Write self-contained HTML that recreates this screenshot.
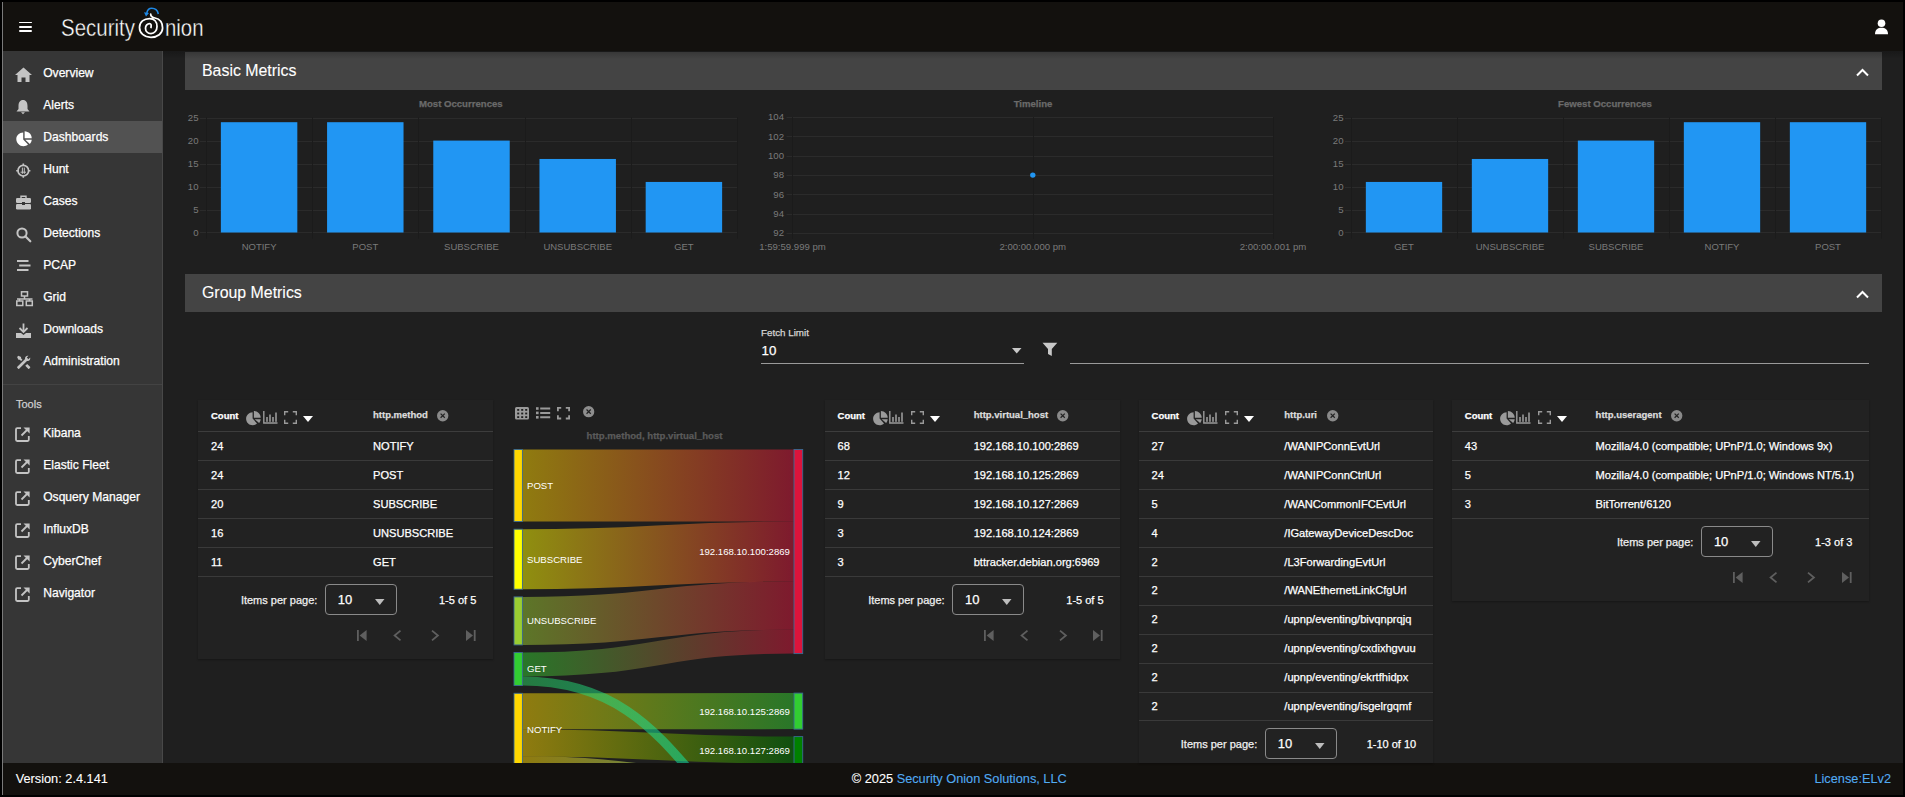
<!DOCTYPE html><html><head><meta charset="utf-8"><style>
html,body{margin:0;padding:0;width:1905px;height:797px;overflow:hidden;background:#000;}
body{position:relative;font-family:"Liberation Sans",sans-serif;}
.t{position:absolute;white-space:nowrap;-webkit-text-stroke:0.25px currentColor;}
.r{position:absolute;}
svg{position:absolute;overflow:visible;}
</style></head><body>
<div class="r" style="left:2px;top:2px;width:1px;height:793px;background:#7a7a7a;"></div>
<div class="r" style="left:3px;top:2px;width:1900px;height:49px;background:#13110e;"></div>
<div class="r" style="left:3px;top:51px;width:159px;height:712px;background:#363636;"></div>
<div class="r" style="left:162px;top:51px;width:1px;height:712px;background:#484848;"></div>
<div class="r" style="left:163px;top:51px;width:1740px;height:712px;background:#1f1f1f;"></div>
<div class="r" style="left:3px;top:763px;width:1900px;height:32px;background:#13110e;"></div>
<div class="r" style="left:19px;top:21.5px;width:12.5px;height:1.9px;background:#fff;border-radius:1px;"></div>
<div class="r" style="left:19px;top:25.8px;width:12.5px;height:1.9px;background:#fff;border-radius:1px;"></div>
<div class="r" style="left:19px;top:30.1px;width:12.5px;height:1.9px;background:#fff;border-radius:1px;"></div>
<svg style="left:61px;top:2px;" width="150" height="48" viewBox="0 0 150 48">
<text x="0" y="34" font-family="Liberation Sans" font-size="24.3" fill="#fff" stroke="#13110e" stroke-width="0.4" textLength="74" lengthAdjust="spacingAndGlyphs">Security</text>
<text x="104" y="34" font-family="Liberation Sans" font-size="24.3" fill="#fff" stroke="#13110e" stroke-width="0.4" textLength="38.5" lengthAdjust="spacingAndGlyphs">nion</text>
<path d="M89.7 12.2 C89.7 14.5 91.5 15.5 94 16 C99 17 101.6 21 101.6 26 C101.6 31.5 96.5 35.3 90 35.3 C83 35.3 78.5 31 78.5 25.5 C78.5 20 83 16.5 88.5 16.5 C93 16.5 96 19.5 96 24.5 C96 28.5 93.5 31.5 90 31.5 C86.5 31.5 84.5 29 84.5 26.2 C84.5 23.5 86.5 21.5 88.5 21.5 C90 21.5 90.5 23 90 25.5" fill="none" stroke="#fff" stroke-width="1.75" stroke-linecap="round"/>
<path d="M97.3 12 C96.5 8 94 6.3 90.7 6.3 C88 6.3 86.3 8.5 85.8 11" fill="none" stroke="#1e88e5" stroke-width="1.6"/>
<path d="M83 10.3 L88 11 L85 14.6 Z" fill="#1e88e5"/>
</svg>
<svg style="left:1870px;top:14px;" width="20" height="24" viewBox="0 0 20 24"><circle cx="11.5" cy="9.3" r="3.8" fill="#fff"/><path d="M5 20.3 C5 15.5 8 13.8 11.5 13.8 C15 13.8 18 15.5 18 20.3 Z" fill="#fff"/></svg>
<svg style="left:14.8px;top:67px;" width="18" height="17" viewBox="0 0 18 17"><path d="M8.5 0.5 L17 8 L14.5 8 L14.5 15 L10.5 15 L10.5 10.5 L6.5 10.5 L6.5 15 L2.5 15 L2.5 8 L0 8 Z" fill="#c4c4c4"/></svg>
<div class="t" style="left:43.2px;top:66.76px;font-size:12.1px;line-height:12.1px;color:#fff;font-weight:normal;">Overview</div>
<svg style="left:15.5px;top:99px;" width="18" height="17" viewBox="0 0 18 17"><path d="M7 1 C10 1 11.5 3.5 11.5 7 L11.5 10 L13.5 12.5 L0.5 12.5 L2.5 10 L2.5 7 C2.5 3.5 4 1 7 1 Z" fill="#c4c4c4"/><path d="M5 13.3 L9 13.3 L7 15.2 Z" fill="#c4c4c4"/></svg>
<div class="t" style="left:43.2px;top:98.76px;font-size:12.1px;line-height:12.1px;color:#fff;font-weight:normal;">Alerts</div>
<div class="r" style="left:3px;top:121px;width:159px;height:32px;background:#525252;"></div>
<svg style="left:15.5px;top:131px;" width="18" height="17" viewBox="0 0 18 17"><path d="M7.2 1.5 L7.2 8.5 L12 13.5 C10.8 14.6 9.2 15.2 7.5 15.2 C3.5 15.2 0.3 12 0.3 8 C0.3 4.4 3.2 1.6 7.2 1.5 Z" fill="#fff"/><path d="M8.6 0.3 C12.6 0.5 15.7 3.4 15.7 7.2 L8.6 7.2 Z" fill="#fff"/><path d="M9.3 8.8 L15.7 8.8 C15.6 10.4 15 11.8 13.8 12.9 Z" fill="#fff"/></svg>
<div class="t" style="left:43.2px;top:130.76px;font-size:12.1px;line-height:12.1px;color:#fff;font-weight:normal;">Dashboards</div>
<svg style="left:15.5px;top:163px;" width="18" height="17" viewBox="0 0 18 17"><circle cx="7.3" cy="7.7" r="5.3" fill="none" stroke="#c4c4c4" stroke-width="1.7"/><path d="M7.3 0.6 V3 M7.3 12.4 V14.8 M0.2 7.7 H2.6 M12 7.7 H14.4" stroke="#c4c4c4" stroke-width="1.6"/><path d="M6.4 4.6 V10.8 M8.3 4.6 V10.8 M4.6 9.2 H10" stroke="#c4c4c4" stroke-width="1"/></svg>
<div class="t" style="left:43.2px;top:162.76px;font-size:12.1px;line-height:12.1px;color:#fff;font-weight:normal;">Hunt</div>
<svg style="left:15.5px;top:195px;" width="18" height="17" viewBox="0 0 18 17"><path d="M5 3 V1.2 H10 V3" fill="none" stroke="#c4c4c4" stroke-width="1.4"/><rect x="0" y="3" width="15" height="5" rx="1.2" fill="#c4c4c4"/><rect x="0" y="9" width="15" height="5.5" rx="1.2" fill="#c4c4c4"/><rect x="6" y="7" width="3" height="3" fill="#363636"/></svg>
<div class="t" style="left:43.2px;top:194.76px;font-size:12.1px;line-height:12.1px;color:#fff;font-weight:normal;">Cases</div>
<svg style="left:15.5px;top:227px;" width="18" height="17" viewBox="0 0 18 17"><circle cx="6" cy="6" r="4.6" fill="none" stroke="#c4c4c4" stroke-width="2"/><path d="M9.3 9.3 L14.3 14.3" stroke="#c4c4c4" stroke-width="2.2" stroke-linecap="round"/></svg>
<div class="t" style="left:43.2px;top:226.76px;font-size:12.1px;line-height:12.1px;color:#fff;font-weight:normal;">Detections</div>
<svg style="left:15.5px;top:259px;" width="18" height="17" viewBox="0 0 18 17"><path d="M1 2 H12.5 M3.2 6.5 H14.5 M1 11 H12.5" stroke="#c4c4c4" stroke-width="1.9"/></svg>
<div class="t" style="left:43.2px;top:258.76px;font-size:12.1px;line-height:12.1px;color:#fff;font-weight:normal;">PCAP</div>
<svg style="left:15.5px;top:291px;" width="18" height="17" viewBox="0 0 18 17"><rect x="5.5" y="0.8" width="6" height="4.2" fill="none" stroke="#c4c4c4" stroke-width="1.5"/><path d="M8.5 5 V7.5 M1 8 H16.5 M3.5 8 V10 M13.5 8 V10" stroke="#c4c4c4" stroke-width="1.5"/><rect x="0.8" y="10" width="6" height="4.5" fill="none" stroke="#c4c4c4" stroke-width="1.5"/><rect x="10.3" y="10" width="6" height="4.5" fill="none" stroke="#c4c4c4" stroke-width="1.5"/></svg>
<div class="t" style="left:43.2px;top:290.76px;font-size:12.1px;line-height:12.1px;color:#fff;font-weight:normal;">Grid</div>
<svg style="left:15.5px;top:323px;" width="18" height="17" viewBox="0 0 18 17"><path d="M7.5 0.5 V8" stroke="#c4c4c4" stroke-width="1.8"/><path d="M3.5 5 L7.5 9 L11.5 5" fill="none" stroke="#c4c4c4" stroke-width="1.8"/><path d="M0 10 H5 L7.5 12 L10 10 H15 V15 H0 Z" fill="#c4c4c4"/></svg>
<div class="t" style="left:43.2px;top:322.76px;font-size:12.1px;line-height:12.1px;color:#fff;font-weight:normal;">Downloads</div>
<svg style="left:15.5px;top:355px;" width="18" height="17" viewBox="0 0 18 17"><g transform="translate(15.6,-0.6) scale(-0.66,0.66)"><path d="M21.71 20.29L20.29 21.71A1 1 0 0 1 18.88 21.71L7 9.85A3.81 3.81 0 0 1 6 10A4 4 0 0 1 2.22 4.7L4.76 7.24L5.29 6.71L6.71 5.29L7.24 4.76L4.7 2.22A4 4 0 0 1 10 6A3.81 3.81 0 0 1 9.85 7L21.71 18.88A1 1 0 0 1 21.71 20.29M2.29 18.88A1 1 0 0 0 2.290 20.29L3.71 21.71A1 1 0 0 0 5.12 21.71L9.59 17.25L6.76 14.42M20 2L16 4V6L13.83 8.17L15.83 10.17L18 8H20L22 4Z" fill="#c4c4c4"/></g></svg>
<div class="t" style="left:43.2px;top:354.76px;font-size:12.1px;line-height:12.1px;color:#fff;font-weight:normal;">Administration</div>
<div class="r" style="left:3px;top:384px;width:159px;height:1px;background:#434343;"></div>
<div class="t" style="left:16px;top:398.69px;font-size:11px;line-height:11px;color:#cfcfcf;font-weight:normal;">Tools</div>
<svg style="left:15.3px;top:426.7px;" width="16" height="16" viewBox="0 0 16 16"><path d="M6 1.2 H2.2 C1.5 1.2 1 1.7 1 2.4 V12.8 C1 13.5 1.5 14 2.2 14 H12.6 C13.3 14 13.8 13.5 13.8 12.8 V9" fill="none" stroke="#c4c4c4" stroke-width="1.8"/><path d="M6.5 8.5 L13 2" stroke="#c4c4c4" stroke-width="1.8"/><path d="M8.5 0.5 H14.6 V6.6 Z" fill="#c4c4c4"/></svg>
<div class="t" style="left:43.2px;top:426.76px;font-size:12.1px;line-height:12.1px;color:#fff;font-weight:normal;">Kibana</div>
<svg style="left:15.3px;top:458.7px;" width="16" height="16" viewBox="0 0 16 16"><path d="M6 1.2 H2.2 C1.5 1.2 1 1.7 1 2.4 V12.8 C1 13.5 1.5 14 2.2 14 H12.6 C13.3 14 13.8 13.5 13.8 12.8 V9" fill="none" stroke="#c4c4c4" stroke-width="1.8"/><path d="M6.5 8.5 L13 2" stroke="#c4c4c4" stroke-width="1.8"/><path d="M8.5 0.5 H14.6 V6.6 Z" fill="#c4c4c4"/></svg>
<div class="t" style="left:43.2px;top:458.76px;font-size:12.1px;line-height:12.1px;color:#fff;font-weight:normal;">Elastic Fleet</div>
<svg style="left:15.3px;top:490.7px;" width="16" height="16" viewBox="0 0 16 16"><path d="M6 1.2 H2.2 C1.5 1.2 1 1.7 1 2.4 V12.8 C1 13.5 1.5 14 2.2 14 H12.6 C13.3 14 13.8 13.5 13.8 12.8 V9" fill="none" stroke="#c4c4c4" stroke-width="1.8"/><path d="M6.5 8.5 L13 2" stroke="#c4c4c4" stroke-width="1.8"/><path d="M8.5 0.5 H14.6 V6.6 Z" fill="#c4c4c4"/></svg>
<div class="t" style="left:43.2px;top:490.76px;font-size:12.1px;line-height:12.1px;color:#fff;font-weight:normal;">Osquery Manager</div>
<svg style="left:15.3px;top:522.7px;" width="16" height="16" viewBox="0 0 16 16"><path d="M6 1.2 H2.2 C1.5 1.2 1 1.7 1 2.4 V12.8 C1 13.5 1.5 14 2.2 14 H12.6 C13.3 14 13.8 13.5 13.8 12.8 V9" fill="none" stroke="#c4c4c4" stroke-width="1.8"/><path d="M6.5 8.5 L13 2" stroke="#c4c4c4" stroke-width="1.8"/><path d="M8.5 0.5 H14.6 V6.6 Z" fill="#c4c4c4"/></svg>
<div class="t" style="left:43.2px;top:522.76px;font-size:12.1px;line-height:12.1px;color:#fff;font-weight:normal;">InfluxDB</div>
<svg style="left:15.3px;top:554.7px;" width="16" height="16" viewBox="0 0 16 16"><path d="M6 1.2 H2.2 C1.5 1.2 1 1.7 1 2.4 V12.8 C1 13.5 1.5 14 2.2 14 H12.6 C13.3 14 13.8 13.5 13.8 12.8 V9" fill="none" stroke="#c4c4c4" stroke-width="1.8"/><path d="M6.5 8.5 L13 2" stroke="#c4c4c4" stroke-width="1.8"/><path d="M8.5 0.5 H14.6 V6.6 Z" fill="#c4c4c4"/></svg>
<div class="t" style="left:43.2px;top:554.76px;font-size:12.1px;line-height:12.1px;color:#fff;font-weight:normal;">CyberChef</div>
<svg style="left:15.3px;top:586.7px;" width="16" height="16" viewBox="0 0 16 16"><path d="M6 1.2 H2.2 C1.5 1.2 1 1.7 1 2.4 V12.8 C1 13.5 1.5 14 2.2 14 H12.6 C13.3 14 13.8 13.5 13.8 12.8 V9" fill="none" stroke="#c4c4c4" stroke-width="1.8"/><path d="M6.5 8.5 L13 2" stroke="#c4c4c4" stroke-width="1.8"/><path d="M8.5 0.5 H14.6 V6.6 Z" fill="#c4c4c4"/></svg>
<div class="t" style="left:43.2px;top:586.76px;font-size:12.1px;line-height:12.1px;color:#fff;font-weight:normal;">Navigator</div>
<div class="t" style="left:15.7px;top:773.21px;font-size:12.75px;line-height:12.75px;color:#fff;font-weight:normal;-webkit-text-stroke:0.1px currentColor;">Version: 2.4.141</div>
<div class="t" style="left:851.8px;top:773.21px;font-size:12.75px;line-height:12.75px;color:#fff;font-weight:normal;-webkit-text-stroke:0.1px currentColor;">© 2025 <span style="color:#52abf2">Security Onion Solutions, LLC</span></div>
<div class="t" style="right:14px;top:773.21px;font-size:12.75px;line-height:12.75px;color:#52abf2;font-weight:normal;-webkit-text-stroke:0.1px currentColor;">License:ELv2</div>
<div class="r" style="left:185px;top:52px;width:1697px;height:38px;background:#444444;"></div>
<div class="t" style="left:202px;top:62.54px;font-size:15.9px;line-height:15.9px;color:#fff;font-weight:normal;-webkit-text-stroke:0.1px currentColor;">Basic Metrics</div>
<svg style="left:1855px;top:67.8px;" width="16" height="10" viewBox="0 0 16 10"><path d="M2 7.5 L7.5 2 L13 7.5" fill="none" stroke="#fff" stroke-width="2"/></svg>
<div class="r" style="left:185px;top:274px;width:1697px;height:38px;background:#444444;"></div>
<div class="t" style="left:202px;top:284.54px;font-size:15.9px;line-height:15.9px;color:#fff;font-weight:normal;-webkit-text-stroke:0.1px currentColor;">Group Metrics</div>
<svg style="left:1855px;top:289.8px;" width="16" height="10" viewBox="0 0 16 10"><path d="M2 7.5 L7.5 2 L13 7.5" fill="none" stroke="#fff" stroke-width="2"/></svg>
<div class="r" style="left:163px;top:51px;width:1740px;height:8px;background:linear-gradient(rgba(0,0,0,0.22),rgba(0,0,0,0));"></div>
<svg style="left:0px;top:0px;left:0;top:0;" width="1905" height="797" viewBox="0 0 1905 797"><line x1="200" y1="232.5" x2="737" y2="232.5" stroke="#2b2b2b" stroke-width="1"/><line x1="200" y1="210.5" x2="737" y2="210.5" stroke="#2b2b2b" stroke-width="1"/><line x1="200" y1="187.5" x2="737" y2="187.5" stroke="#2b2b2b" stroke-width="1"/><line x1="200" y1="164.5" x2="737" y2="164.5" stroke="#2b2b2b" stroke-width="1"/><line x1="200" y1="141.5" x2="737" y2="141.5" stroke="#2b2b2b" stroke-width="1"/><line x1="200" y1="118.5" x2="737" y2="118.5" stroke="#2b2b2b" stroke-width="1"/><line x1="206.5" y1="117.6" x2="206.5" y2="238.5" stroke="#1b1b1b" stroke-width="1"/><line x1="312.5" y1="117.6" x2="312.5" y2="238.5" stroke="#1b1b1b" stroke-width="1"/><line x1="418.5" y1="117.6" x2="418.5" y2="238.5" stroke="#1b1b1b" stroke-width="1"/><line x1="525.5" y1="117.6" x2="525.5" y2="238.5" stroke="#1b1b1b" stroke-width="1"/><line x1="631.5" y1="117.6" x2="631.5" y2="238.5" stroke="#1b1b1b" stroke-width="1"/><line x1="737.5" y1="117.6" x2="737.5" y2="238.5" stroke="#1b1b1b" stroke-width="1"/><rect x="220.87" y="122.20" width="76.46" height="110.30" fill="#2196f3"/><rect x="327.07" y="122.20" width="76.46" height="110.30" fill="#2196f3"/><rect x="433.27" y="140.58" width="76.46" height="91.92" fill="#2196f3"/><rect x="539.47" y="158.96" width="76.46" height="73.54" fill="#2196f3"/><rect x="645.67" y="181.94" width="76.46" height="50.56" fill="#2196f3"/></svg>
<div class="t" style="right:1706.5px;top:227.87px;font-size:9.6px;line-height:9.6px;color:#7a7a7a;font-weight:normal;-webkit-text-stroke:0;">0</div>
<div class="t" style="right:1706.5px;top:204.89px;font-size:9.6px;line-height:9.6px;color:#7a7a7a;font-weight:normal;-webkit-text-stroke:0;">5</div>
<div class="t" style="right:1706.5px;top:181.91px;font-size:9.6px;line-height:9.6px;color:#7a7a7a;font-weight:normal;-webkit-text-stroke:0;">10</div>
<div class="t" style="right:1706.5px;top:158.93px;font-size:9.6px;line-height:9.6px;color:#7a7a7a;font-weight:normal;-webkit-text-stroke:0;">15</div>
<div class="t" style="right:1706.5px;top:135.95px;font-size:9.6px;line-height:9.6px;color:#7a7a7a;font-weight:normal;-webkit-text-stroke:0;">20</div>
<div class="t" style="right:1706.5px;top:112.97px;font-size:9.6px;line-height:9.6px;color:#7a7a7a;font-weight:normal;-webkit-text-stroke:0;">25</div>
<div class="t" style="left:259.1px;transform:translateX(-50%);top:241.96px;font-size:9.5px;line-height:9.5px;color:#7a7a7a;font-weight:normal;-webkit-text-stroke:0;">NOTIFY</div>
<div class="t" style="left:365.3px;transform:translateX(-50%);top:241.96px;font-size:9.5px;line-height:9.5px;color:#7a7a7a;font-weight:normal;-webkit-text-stroke:0;">POST</div>
<div class="t" style="left:471.5px;transform:translateX(-50%);top:241.96px;font-size:9.5px;line-height:9.5px;color:#7a7a7a;font-weight:normal;-webkit-text-stroke:0;">SUBSCRIBE</div>
<div class="t" style="left:577.7px;transform:translateX(-50%);top:241.96px;font-size:9.5px;line-height:9.5px;color:#7a7a7a;font-weight:normal;-webkit-text-stroke:0;">UNSUBSCRIBE</div>
<div class="t" style="left:683.9000000000001px;transform:translateX(-50%);top:241.96px;font-size:9.5px;line-height:9.5px;color:#7a7a7a;font-weight:normal;-webkit-text-stroke:0;">GET</div>
<div class="t" style="left:460.8px;transform:translateX(-50%);top:98.87px;font-size:9.6px;line-height:9.6px;color:#6a6a6a;font-weight:bold;">Most Occurrences</div>
<svg style="left:0px;top:0px;left:0;top:0;" width="1905" height="797" viewBox="0 0 1905 797"><line x1="1345" y1="232.5" x2="1881" y2="232.5" stroke="#2b2b2b" stroke-width="1"/><line x1="1345" y1="210.5" x2="1881" y2="210.5" stroke="#2b2b2b" stroke-width="1"/><line x1="1345" y1="187.5" x2="1881" y2="187.5" stroke="#2b2b2b" stroke-width="1"/><line x1="1345" y1="164.5" x2="1881" y2="164.5" stroke="#2b2b2b" stroke-width="1"/><line x1="1345" y1="141.5" x2="1881" y2="141.5" stroke="#2b2b2b" stroke-width="1"/><line x1="1345" y1="118.5" x2="1881" y2="118.5" stroke="#2b2b2b" stroke-width="1"/><line x1="1351.5" y1="117.6" x2="1351.5" y2="238.5" stroke="#1b1b1b" stroke-width="1"/><line x1="1457.5" y1="117.6" x2="1457.5" y2="238.5" stroke="#1b1b1b" stroke-width="1"/><line x1="1563.5" y1="117.6" x2="1563.5" y2="238.5" stroke="#1b1b1b" stroke-width="1"/><line x1="1669.5" y1="117.6" x2="1669.5" y2="238.5" stroke="#1b1b1b" stroke-width="1"/><line x1="1775.5" y1="117.6" x2="1775.5" y2="238.5" stroke="#1b1b1b" stroke-width="1"/><line x1="1881.5" y1="117.6" x2="1881.5" y2="238.5" stroke="#1b1b1b" stroke-width="1"/><rect x="1365.84" y="181.94" width="76.32" height="50.56" fill="#2196f3"/><rect x="1471.84" y="158.96" width="76.32" height="73.54" fill="#2196f3"/><rect x="1577.84" y="140.58" width="76.32" height="91.92" fill="#2196f3"/><rect x="1683.84" y="122.20" width="76.32" height="110.30" fill="#2196f3"/><rect x="1789.84" y="122.20" width="76.32" height="110.30" fill="#2196f3"/></svg>
<div class="t" style="right:561.5px;top:227.87px;font-size:9.6px;line-height:9.6px;color:#7a7a7a;font-weight:normal;-webkit-text-stroke:0;">0</div>
<div class="t" style="right:561.5px;top:204.89px;font-size:9.6px;line-height:9.6px;color:#7a7a7a;font-weight:normal;-webkit-text-stroke:0;">5</div>
<div class="t" style="right:561.5px;top:181.91px;font-size:9.6px;line-height:9.6px;color:#7a7a7a;font-weight:normal;-webkit-text-stroke:0;">10</div>
<div class="t" style="right:561.5px;top:158.93px;font-size:9.6px;line-height:9.6px;color:#7a7a7a;font-weight:normal;-webkit-text-stroke:0;">15</div>
<div class="t" style="right:561.5px;top:135.95px;font-size:9.6px;line-height:9.6px;color:#7a7a7a;font-weight:normal;-webkit-text-stroke:0;">20</div>
<div class="t" style="right:561.5px;top:112.97px;font-size:9.6px;line-height:9.6px;color:#7a7a7a;font-weight:normal;-webkit-text-stroke:0;">25</div>
<div class="t" style="left:1404.0px;transform:translateX(-50%);top:241.96px;font-size:9.5px;line-height:9.5px;color:#7a7a7a;font-weight:normal;-webkit-text-stroke:0;">GET</div>
<div class="t" style="left:1510.0px;transform:translateX(-50%);top:241.96px;font-size:9.5px;line-height:9.5px;color:#7a7a7a;font-weight:normal;-webkit-text-stroke:0;">UNSUBSCRIBE</div>
<div class="t" style="left:1616.0px;transform:translateX(-50%);top:241.96px;font-size:9.5px;line-height:9.5px;color:#7a7a7a;font-weight:normal;-webkit-text-stroke:0;">SUBSCRIBE</div>
<div class="t" style="left:1722.0px;transform:translateX(-50%);top:241.96px;font-size:9.5px;line-height:9.5px;color:#7a7a7a;font-weight:normal;-webkit-text-stroke:0;">NOTIFY</div>
<div class="t" style="left:1828.0px;transform:translateX(-50%);top:241.96px;font-size:9.5px;line-height:9.5px;color:#7a7a7a;font-weight:normal;-webkit-text-stroke:0;">POST</div>
<div class="t" style="left:1605px;transform:translateX(-50%);top:98.87px;font-size:9.6px;line-height:9.6px;color:#6a6a6a;font-weight:bold;">Fewest Occurrences</div>
<svg style="left:0px;top:0px;left:0;top:0;" width="1905" height="797" viewBox="0 0 1905 797"><line x1="786.5" y1="117.5" x2="1273" y2="117.5" stroke="#2b2b2b" stroke-width="1"/><line x1="786.5" y1="136.5" x2="1273" y2="136.5" stroke="#2b2b2b" stroke-width="1"/><line x1="786.5" y1="156.5" x2="1273" y2="156.5" stroke="#2b2b2b" stroke-width="1"/><line x1="786.5" y1="175.5" x2="1273" y2="175.5" stroke="#2b2b2b" stroke-width="1"/><line x1="786.5" y1="194.5" x2="1273" y2="194.5" stroke="#2b2b2b" stroke-width="1"/><line x1="786.5" y1="214.5" x2="1273" y2="214.5" stroke="#2b2b2b" stroke-width="1"/><line x1="786.5" y1="233.5" x2="1273" y2="233.5" stroke="#2b2b2b" stroke-width="1"/><line x1="792.5" y1="117.1" x2="792.5" y2="239.0" stroke="#1b1b1b" stroke-width="1"/><line x1="1033.5" y1="117.1" x2="1033.5" y2="239.0" stroke="#1b1b1b" stroke-width="1"/><line x1="1273.5" y1="117.1" x2="1273.5" y2="239.0" stroke="#1b1b1b" stroke-width="1"/><circle cx="1032.8" cy="175.1" r="2.7" fill="#2196f3"/></svg>
<div class="t" style="right:1121.0px;top:112.47px;font-size:9.6px;line-height:9.6px;color:#7a7a7a;font-weight:normal;-webkit-text-stroke:0;">104</div>
<div class="t" style="right:1121.0px;top:131.79px;font-size:9.6px;line-height:9.6px;color:#7a7a7a;font-weight:normal;-webkit-text-stroke:0;">102</div>
<div class="t" style="right:1121.0px;top:151.11px;font-size:9.6px;line-height:9.6px;color:#7a7a7a;font-weight:normal;-webkit-text-stroke:0;">100</div>
<div class="t" style="right:1121.0px;top:170.42px;font-size:9.6px;line-height:9.6px;color:#7a7a7a;font-weight:normal;-webkit-text-stroke:0;">98</div>
<div class="t" style="right:1121.0px;top:189.74px;font-size:9.6px;line-height:9.6px;color:#7a7a7a;font-weight:normal;-webkit-text-stroke:0;">96</div>
<div class="t" style="right:1121.0px;top:209.06px;font-size:9.6px;line-height:9.6px;color:#7a7a7a;font-weight:normal;-webkit-text-stroke:0;">94</div>
<div class="t" style="right:1121.0px;top:228.37px;font-size:9.6px;line-height:9.6px;color:#7a7a7a;font-weight:normal;-webkit-text-stroke:0;">92</div>
<div class="t" style="left:792.5px;transform:translateX(-50%);top:241.87px;font-size:9.6px;line-height:9.6px;color:#7a7a7a;font-weight:normal;-webkit-text-stroke:0;">1:59:59.999 pm</div>
<div class="t" style="left:1032.75px;transform:translateX(-50%);top:241.87px;font-size:9.6px;line-height:9.6px;color:#7a7a7a;font-weight:normal;-webkit-text-stroke:0;">2:00:00.000 pm</div>
<div class="t" style="left:1273px;transform:translateX(-50%);top:241.87px;font-size:9.6px;line-height:9.6px;color:#7a7a7a;font-weight:normal;-webkit-text-stroke:0;">2:00:00.001 pm</div>
<div class="t" style="left:1033px;transform:translateX(-50%);top:98.87px;font-size:9.6px;line-height:9.6px;color:#6a6a6a;font-weight:bold;">Timeline</div>
<div class="t" style="left:761px;top:328.00px;font-size:9.8px;line-height:9.8px;color:#d6d6d6;font-weight:normal;">Fetch Limit</div>
<div class="t" style="left:761.5px;top:343.84px;font-size:13.3px;line-height:13.3px;color:#fff;font-weight:normal;">10</div>
<div class="r" style="left:761px;top:363px;width:263px;height:1px;background:#9a9a9a;"></div>
<svg style="left:1011px;top:347px;" width="12" height="8" viewBox="0 0 12 8"><path d="M1 1 L10.5 1 L5.75 6.5 Z" fill="#c8c8c8"/></svg>
<svg style="left:1042px;top:342px;" width="17" height="16" viewBox="0 0 17 16"><path d="M0.5 0.8 H15.3 L9.8 7 V14 L6 12 V7 Z" fill="#c8c8c8"/></svg>
<div class="r" style="left:1070px;top:363px;width:799px;height:1px;background:#9a9a9a;"></div>
<div class="r" style="left:198.3px;top:400px;width:294.4px;height:258.5px;background:#222222;box-shadow:0 1px 2px rgba(0,0,0,0.3);"></div>
<div class="t" style="left:211px;top:410.96px;font-size:9.5px;line-height:9.5px;color:#fff;font-weight:bold;">Count</div>
<svg style="left:246px;top:410.8px;" width="16" height="15" viewBox="0 0 16 15"><path d="M6.6 1.2 V7.6 L11 12.4 C9.8 13.5 8.3 14.2 6.6 14.2 C3 14.2 0.1 11.3 0.1 7.7 C0.1 4.2 3 1.3 6.6 1.2 Z" fill="#9a9a9a"/><path d="M7.9 0.1 C11.6 0.2 14.5 3 14.7 6.7 L7.9 6.7 Z" fill="#9a9a9a"/><path d="M8.7 8.2 L14.7 8.2 C14.6 9.7 14 11 13.1 12 Z" fill="#9a9a9a"/></svg>
<svg style="left:262.6px;top:411.4px;" width="16" height="13" viewBox="0 0 16 13"><path d="M0.8 0 V12 H14.5" fill="none" stroke="#9a9a9a" stroke-width="1.4"/><rect x="3.2" y="6" width="1.6" height="4.8" fill="#9a9a9a"/><rect x="6.2" y="3.5" width="1.6" height="7.3" fill="#9a9a9a"/><rect x="9.2" y="6" width="1.6" height="4.8" fill="#9a9a9a"/><rect x="12.2" y="1.5" width="1.6" height="9.3" fill="#9a9a9a"/></svg>
<svg style="left:284px;top:411.4px;" width="14" height="13" viewBox="0 0 14 13"><path d="M0.7 4.2 V0.7 H4.2 M8.8 0.7 H12.3 V4.2 M12.3 8.8 V12.3 H8.8 M4.2 12.3 H0.7 V8.8" fill="none" stroke="#9a9a9a" stroke-width="1.4"/></svg>
<svg style="left:303px;top:415.9px;" width="11" height="7" viewBox="0 0 11 7"><path d="M0 0 H10 L5 5.9 Z" fill="#fff"/></svg>
<div class="t" style="left:373px;top:409.96px;font-size:9.5px;line-height:9.5px;color:#dcdcdc;font-weight:bold;">http.method</div>
<svg style="left:437.09999999999997px;top:409.9px;" width="11.4" height="11.4" viewBox="0 0 11.4 11.4"><circle cx="5.7" cy="5.7" r="5.7" fill="#8a8a8a"/><path d="M3.6 3.6 L7.800000000000001 7.800000000000001 M7.800000000000001 3.6 L3.6 7.800000000000001" stroke="#222" stroke-width="1.2"/></svg>
<div class="r" style="left:198.3px;top:431px;width:294.4px;height:1px;background:#3d3d3d;"></div>
<div class="t" style="left:211px;top:440.80px;font-size:11.1px;line-height:11.1px;color:#fff;font-weight:normal;">24</div>
<div class="t" style="left:373px;top:440.80px;font-size:11.1px;line-height:11.1px;color:#fff;font-weight:normal;">NOTIFY</div>
<div class="r" style="left:198.3px;top:460px;width:294.4px;height:1px;background:#3a3a3a;"></div>
<div class="t" style="left:211px;top:469.73px;font-size:11.1px;line-height:11.1px;color:#fff;font-weight:normal;">24</div>
<div class="t" style="left:373px;top:469.73px;font-size:11.1px;line-height:11.1px;color:#fff;font-weight:normal;">POST</div>
<div class="r" style="left:198.3px;top:489px;width:294.4px;height:1px;background:#3a3a3a;"></div>
<div class="t" style="left:211px;top:498.66px;font-size:11.1px;line-height:11.1px;color:#fff;font-weight:normal;">20</div>
<div class="t" style="left:373px;top:498.66px;font-size:11.1px;line-height:11.1px;color:#fff;font-weight:normal;">SUBSCRIBE</div>
<div class="r" style="left:198.3px;top:518px;width:294.4px;height:1px;background:#3a3a3a;"></div>
<div class="t" style="left:211px;top:527.59px;font-size:11.1px;line-height:11.1px;color:#fff;font-weight:normal;">16</div>
<div class="t" style="left:373px;top:527.59px;font-size:11.1px;line-height:11.1px;color:#fff;font-weight:normal;">UNSUBSCRIBE</div>
<div class="r" style="left:198.3px;top:547px;width:294.4px;height:1px;background:#3a3a3a;"></div>
<div class="t" style="left:211px;top:556.52px;font-size:11.1px;line-height:11.1px;color:#fff;font-weight:normal;">11</div>
<div class="t" style="left:373px;top:556.52px;font-size:11.1px;line-height:11.1px;color:#fff;font-weight:normal;">GET</div>
<div class="r" style="left:198.3px;top:576px;width:294.4px;height:1px;background:#3a3a3a;"></div>
<div class="t" style="right:1587.7px;top:594.69px;font-size:11px;line-height:11px;color:#f0f0f0;font-weight:normal;">Items per page:</div>
<div class="r" style="left:325.1px;top:584px;width:69.7px;height:29.4px;background:transparent;border:1px solid #8a8a8a;border-radius:4px;"></div>
<div class="t" style="left:337.79999999999995px;top:593.00px;font-size:13px;line-height:13px;color:#fff;font-weight:normal;">10</div>
<svg style="left:375.0px;top:598.7px;" width="11" height="7" viewBox="0 0 11 7"><path d="M0 0 H9.5 L4.75 5.9 Z" fill="#bdbdbd"/></svg>
<div class="t" style="right:1428.7px;top:594.69px;font-size:11px;line-height:11px;color:#fff;font-weight:normal;">1-5 of 5</div>
<svg style="left:356.9px;top:630.0px;" width="11" height="11" viewBox="0 0 11 11"><rect x="0" y="0" width="1.8" height="11" fill="#5f5f5f"/><path d="M9.6 0 V11 L2.6 5.5 Z" fill="#5f5f5f"/></svg>
<svg style="left:393.1px;top:630.0px;" width="9" height="11" viewBox="0 0 9 11"><path d="M7.5 0.6 L1.6 5.5 L7.5 10.4" fill="none" stroke="#5f5f5f" stroke-width="1.8"/></svg>
<svg style="left:431.3px;top:630.0px;" width="9" height="11" viewBox="0 0 9 11"><path d="M1 0.6 L6.9 5.5 L1 10.4" fill="none" stroke="#5f5f5f" stroke-width="1.8"/></svg>
<svg style="left:466.09999999999997px;top:630.0px;" width="11" height="11" viewBox="0 0 11 11"><path d="M0 0 V11 L7 5.5 Z" fill="#5f5f5f"/><rect x="7.8" y="0" width="1.8" height="11" fill="#5f5f5f"/></svg>
<div class="r" style="left:825px;top:400px;width:295px;height:258.5px;background:#222222;box-shadow:0 1px 2px rgba(0,0,0,0.3);"></div>
<div class="t" style="left:837.6px;top:410.96px;font-size:9.5px;line-height:9.5px;color:#fff;font-weight:bold;">Count</div>
<svg style="left:872.6px;top:410.8px;" width="16" height="15" viewBox="0 0 16 15"><path d="M6.6 1.2 V7.6 L11 12.4 C9.8 13.5 8.3 14.2 6.6 14.2 C3 14.2 0.1 11.3 0.1 7.7 C0.1 4.2 3 1.3 6.6 1.2 Z" fill="#9a9a9a"/><path d="M7.9 0.1 C11.6 0.2 14.5 3 14.7 6.7 L7.9 6.7 Z" fill="#9a9a9a"/><path d="M8.7 8.2 L14.7 8.2 C14.6 9.7 14 11 13.1 12 Z" fill="#9a9a9a"/></svg>
<svg style="left:889.2px;top:411.4px;" width="16" height="13" viewBox="0 0 16 13"><path d="M0.8 0 V12 H14.5" fill="none" stroke="#9a9a9a" stroke-width="1.4"/><rect x="3.2" y="6" width="1.6" height="4.8" fill="#9a9a9a"/><rect x="6.2" y="3.5" width="1.6" height="7.3" fill="#9a9a9a"/><rect x="9.2" y="6" width="1.6" height="4.8" fill="#9a9a9a"/><rect x="12.2" y="1.5" width="1.6" height="9.3" fill="#9a9a9a"/></svg>
<svg style="left:910.6px;top:411.4px;" width="14" height="13" viewBox="0 0 14 13"><path d="M0.7 4.2 V0.7 H4.2 M8.8 0.7 H12.3 V4.2 M12.3 8.8 V12.3 H8.8 M4.2 12.3 H0.7 V8.8" fill="none" stroke="#9a9a9a" stroke-width="1.4"/></svg>
<svg style="left:929.6px;top:415.9px;" width="11" height="7" viewBox="0 0 11 7"><path d="M0 0 H10 L5 5.9 Z" fill="#fff"/></svg>
<div class="t" style="left:973.7px;top:409.96px;font-size:9.5px;line-height:9.5px;color:#dcdcdc;font-weight:bold;">http.virtual_host</div>
<svg style="left:1056.9px;top:409.9px;" width="11.4" height="11.4" viewBox="0 0 11.4 11.4"><circle cx="5.7" cy="5.7" r="5.7" fill="#8a8a8a"/><path d="M3.6 3.6 L7.800000000000001 7.800000000000001 M7.800000000000001 3.6 L3.6 7.800000000000001" stroke="#222" stroke-width="1.2"/></svg>
<div class="r" style="left:825px;top:431px;width:295px;height:1px;background:#3d3d3d;"></div>
<div class="t" style="left:837.6px;top:440.80px;font-size:11.1px;line-height:11.1px;color:#fff;font-weight:normal;">68</div>
<div class="t" style="left:973.7px;top:440.80px;font-size:11.1px;line-height:11.1px;color:#fff;font-weight:normal;">192.168.10.100:2869</div>
<div class="r" style="left:825px;top:460px;width:295px;height:1px;background:#3a3a3a;"></div>
<div class="t" style="left:837.6px;top:469.73px;font-size:11.1px;line-height:11.1px;color:#fff;font-weight:normal;">12</div>
<div class="t" style="left:973.7px;top:469.73px;font-size:11.1px;line-height:11.1px;color:#fff;font-weight:normal;">192.168.10.125:2869</div>
<div class="r" style="left:825px;top:489px;width:295px;height:1px;background:#3a3a3a;"></div>
<div class="t" style="left:837.6px;top:498.66px;font-size:11.1px;line-height:11.1px;color:#fff;font-weight:normal;">9</div>
<div class="t" style="left:973.7px;top:498.66px;font-size:11.1px;line-height:11.1px;color:#fff;font-weight:normal;">192.168.10.127:2869</div>
<div class="r" style="left:825px;top:518px;width:295px;height:1px;background:#3a3a3a;"></div>
<div class="t" style="left:837.6px;top:527.59px;font-size:11.1px;line-height:11.1px;color:#fff;font-weight:normal;">3</div>
<div class="t" style="left:973.7px;top:527.59px;font-size:11.1px;line-height:11.1px;color:#fff;font-weight:normal;">192.168.10.124:2869</div>
<div class="r" style="left:825px;top:547px;width:295px;height:1px;background:#3a3a3a;"></div>
<div class="t" style="left:837.6px;top:556.52px;font-size:11.1px;line-height:11.1px;color:#fff;font-weight:normal;">3</div>
<div class="t" style="left:973.7px;top:556.52px;font-size:11.1px;line-height:11.1px;color:#fff;font-weight:normal;">bttracker.debian.org:6969</div>
<div class="r" style="left:825px;top:576px;width:295px;height:1px;background:#3a3a3a;"></div>
<div class="t" style="right:960.4px;top:594.69px;font-size:11px;line-height:11px;color:#f0f0f0;font-weight:normal;">Items per page:</div>
<div class="r" style="left:952.4px;top:584px;width:69.7px;height:29.4px;background:transparent;border:1px solid #8a8a8a;border-radius:4px;"></div>
<div class="t" style="left:965.1px;top:593.00px;font-size:13px;line-height:13px;color:#fff;font-weight:normal;">10</div>
<svg style="left:1002.3px;top:598.7px;" width="11" height="7" viewBox="0 0 11 7"><path d="M0 0 H9.5 L4.75 5.9 Z" fill="#bdbdbd"/></svg>
<div class="t" style="right:801.4000000000001px;top:594.69px;font-size:11px;line-height:11px;color:#fff;font-weight:normal;">1-5 of 5</div>
<svg style="left:984.2px;top:630.0px;" width="11" height="11" viewBox="0 0 11 11"><rect x="0" y="0" width="1.8" height="11" fill="#5f5f5f"/><path d="M9.6 0 V11 L2.6 5.5 Z" fill="#5f5f5f"/></svg>
<svg style="left:1020.4px;top:630.0px;" width="9" height="11" viewBox="0 0 9 11"><path d="M7.5 0.6 L1.6 5.5 L7.5 10.4" fill="none" stroke="#5f5f5f" stroke-width="1.8"/></svg>
<svg style="left:1058.6px;top:630.0px;" width="9" height="11" viewBox="0 0 9 11"><path d="M1 0.6 L6.9 5.5 L1 10.4" fill="none" stroke="#5f5f5f" stroke-width="1.8"/></svg>
<svg style="left:1093.4px;top:630.0px;" width="11" height="11" viewBox="0 0 11 11"><path d="M0 0 V11 L7 5.5 Z" fill="#5f5f5f"/><rect x="7.8" y="0" width="1.8" height="11" fill="#5f5f5f"/></svg>
<div class="r" style="left:1138.5px;top:400px;width:294.0999999999999px;height:363px;background:#222222;box-shadow:0 1px 2px rgba(0,0,0,0.3);"></div>
<div class="t" style="left:1151.6px;top:410.96px;font-size:9.5px;line-height:9.5px;color:#fff;font-weight:bold;">Count</div>
<svg style="left:1186.6px;top:410.8px;" width="16" height="15" viewBox="0 0 16 15"><path d="M6.6 1.2 V7.6 L11 12.4 C9.8 13.5 8.3 14.2 6.6 14.2 C3 14.2 0.1 11.3 0.1 7.7 C0.1 4.2 3 1.3 6.6 1.2 Z" fill="#9a9a9a"/><path d="M7.9 0.1 C11.6 0.2 14.5 3 14.7 6.7 L7.9 6.7 Z" fill="#9a9a9a"/><path d="M8.7 8.2 L14.7 8.2 C14.6 9.7 14 11 13.1 12 Z" fill="#9a9a9a"/></svg>
<svg style="left:1203.1999999999998px;top:411.4px;" width="16" height="13" viewBox="0 0 16 13"><path d="M0.8 0 V12 H14.5" fill="none" stroke="#9a9a9a" stroke-width="1.4"/><rect x="3.2" y="6" width="1.6" height="4.8" fill="#9a9a9a"/><rect x="6.2" y="3.5" width="1.6" height="7.3" fill="#9a9a9a"/><rect x="9.2" y="6" width="1.6" height="4.8" fill="#9a9a9a"/><rect x="12.2" y="1.5" width="1.6" height="9.3" fill="#9a9a9a"/></svg>
<svg style="left:1224.6px;top:411.4px;" width="14" height="13" viewBox="0 0 14 13"><path d="M0.7 4.2 V0.7 H4.2 M8.8 0.7 H12.3 V4.2 M12.3 8.8 V12.3 H8.8 M4.2 12.3 H0.7 V8.8" fill="none" stroke="#9a9a9a" stroke-width="1.4"/></svg>
<svg style="left:1243.6px;top:415.9px;" width="11" height="7" viewBox="0 0 11 7"><path d="M0 0 H10 L5 5.9 Z" fill="#fff"/></svg>
<div class="t" style="left:1284.3px;top:409.96px;font-size:9.5px;line-height:9.5px;color:#dcdcdc;font-weight:bold;">http.uri</div>
<svg style="left:1326.5px;top:409.9px;" width="11.4" height="11.4" viewBox="0 0 11.4 11.4"><circle cx="5.7" cy="5.7" r="5.7" fill="#8a8a8a"/><path d="M3.6 3.6 L7.800000000000001 7.800000000000001 M7.800000000000001 3.6 L3.6 7.800000000000001" stroke="#222" stroke-width="1.2"/></svg>
<div class="r" style="left:1138.5px;top:431px;width:294.0999999999999px;height:1px;background:#3d3d3d;"></div>
<div class="t" style="left:1151.6px;top:440.80px;font-size:11.1px;line-height:11.1px;color:#fff;font-weight:normal;">27</div>
<div class="t" style="left:1284.3px;top:440.80px;font-size:11.1px;line-height:11.1px;color:#fff;font-weight:normal;">/WANIPConnEvtUrl</div>
<div class="r" style="left:1138.5px;top:460px;width:294.0999999999999px;height:1px;background:#3a3a3a;"></div>
<div class="t" style="left:1151.6px;top:469.73px;font-size:11.1px;line-height:11.1px;color:#fff;font-weight:normal;">24</div>
<div class="t" style="left:1284.3px;top:469.73px;font-size:11.1px;line-height:11.1px;color:#fff;font-weight:normal;">/WANIPConnCtrlUrl</div>
<div class="r" style="left:1138.5px;top:489px;width:294.0999999999999px;height:1px;background:#3a3a3a;"></div>
<div class="t" style="left:1151.6px;top:498.66px;font-size:11.1px;line-height:11.1px;color:#fff;font-weight:normal;">5</div>
<div class="t" style="left:1284.3px;top:498.66px;font-size:11.1px;line-height:11.1px;color:#fff;font-weight:normal;">/WANCommonIFCEvtUrl</div>
<div class="r" style="left:1138.5px;top:518px;width:294.0999999999999px;height:1px;background:#3a3a3a;"></div>
<div class="t" style="left:1151.6px;top:527.59px;font-size:11.1px;line-height:11.1px;color:#fff;font-weight:normal;">4</div>
<div class="t" style="left:1284.3px;top:527.59px;font-size:11.1px;line-height:11.1px;color:#fff;font-weight:normal;">/IGatewayDeviceDescDoc</div>
<div class="r" style="left:1138.5px;top:547px;width:294.0999999999999px;height:1px;background:#3a3a3a;"></div>
<div class="t" style="left:1151.6px;top:556.52px;font-size:11.1px;line-height:11.1px;color:#fff;font-weight:normal;">2</div>
<div class="t" style="left:1284.3px;top:556.52px;font-size:11.1px;line-height:11.1px;color:#fff;font-weight:normal;">/L3ForwardingEvtUrl</div>
<div class="r" style="left:1138.5px;top:576px;width:294.0999999999999px;height:1px;background:#3a3a3a;"></div>
<div class="t" style="left:1151.6px;top:585.45px;font-size:11.1px;line-height:11.1px;color:#fff;font-weight:normal;">2</div>
<div class="t" style="left:1284.3px;top:585.45px;font-size:11.1px;line-height:11.1px;color:#fff;font-weight:normal;">/WANEthernetLinkCfgUrl</div>
<div class="r" style="left:1138.5px;top:605px;width:294.0999999999999px;height:1px;background:#3a3a3a;"></div>
<div class="t" style="left:1151.6px;top:614.38px;font-size:11.1px;line-height:11.1px;color:#fff;font-weight:normal;">2</div>
<div class="t" style="left:1284.3px;top:614.38px;font-size:11.1px;line-height:11.1px;color:#fff;font-weight:normal;">/upnp/eventing/bivqnprqjq</div>
<div class="r" style="left:1138.5px;top:634px;width:294.0999999999999px;height:1px;background:#3a3a3a;"></div>
<div class="t" style="left:1151.6px;top:643.31px;font-size:11.1px;line-height:11.1px;color:#fff;font-weight:normal;">2</div>
<div class="t" style="left:1284.3px;top:643.31px;font-size:11.1px;line-height:11.1px;color:#fff;font-weight:normal;">/upnp/eventing/cxdixhgvuu</div>
<div class="r" style="left:1138.5px;top:663px;width:294.0999999999999px;height:1px;background:#3a3a3a;"></div>
<div class="t" style="left:1151.6px;top:672.24px;font-size:11.1px;line-height:11.1px;color:#fff;font-weight:normal;">2</div>
<div class="t" style="left:1284.3px;top:672.24px;font-size:11.1px;line-height:11.1px;color:#fff;font-weight:normal;">/upnp/eventing/ekrtfhidpx</div>
<div class="r" style="left:1138.5px;top:692px;width:294.0999999999999px;height:1px;background:#3a3a3a;"></div>
<div class="t" style="left:1151.6px;top:701.17px;font-size:11.1px;line-height:11.1px;color:#fff;font-weight:normal;">2</div>
<div class="t" style="left:1284.3px;top:701.17px;font-size:11.1px;line-height:11.1px;color:#fff;font-weight:normal;">/upnp/eventing/isgelrgqmf</div>
<div class="r" style="left:1138.5px;top:720px;width:294.0999999999999px;height:1px;background:#3a3a3a;"></div>
<div class="t" style="right:647.8000000000002px;top:738.69px;font-size:11px;line-height:11px;color:#f0f0f0;font-weight:normal;">Items per page:</div>
<div class="r" style="left:1265.0px;top:728px;width:69.7px;height:29.4px;background:transparent;border:1px solid #8a8a8a;border-radius:4px;"></div>
<div class="t" style="left:1277.6999999999998px;top:737.00px;font-size:13px;line-height:13px;color:#fff;font-weight:normal;">10</div>
<svg style="left:1314.8999999999999px;top:742.7px;" width="11" height="7" viewBox="0 0 11 7"><path d="M0 0 H9.5 L4.75 5.9 Z" fill="#bdbdbd"/></svg>
<div class="t" style="right:488.8000000000002px;top:738.69px;font-size:11px;line-height:11px;color:#fff;font-weight:normal;">1-10 of 10</div>
<div class="r" style="left:1452.1px;top:400px;width:416.70000000000005px;height:200.5px;background:#222222;box-shadow:0 1px 2px rgba(0,0,0,0.3);"></div>
<div class="t" style="left:1464.8px;top:410.96px;font-size:9.5px;line-height:9.5px;color:#fff;font-weight:bold;">Count</div>
<svg style="left:1499.8px;top:410.8px;" width="16" height="15" viewBox="0 0 16 15"><path d="M6.6 1.2 V7.6 L11 12.4 C9.8 13.5 8.3 14.2 6.6 14.2 C3 14.2 0.1 11.3 0.1 7.7 C0.1 4.2 3 1.3 6.6 1.2 Z" fill="#9a9a9a"/><path d="M7.9 0.1 C11.6 0.2 14.5 3 14.7 6.7 L7.9 6.7 Z" fill="#9a9a9a"/><path d="M8.7 8.2 L14.7 8.2 C14.6 9.7 14 11 13.1 12 Z" fill="#9a9a9a"/></svg>
<svg style="left:1516.3999999999999px;top:411.4px;" width="16" height="13" viewBox="0 0 16 13"><path d="M0.8 0 V12 H14.5" fill="none" stroke="#9a9a9a" stroke-width="1.4"/><rect x="3.2" y="6" width="1.6" height="4.8" fill="#9a9a9a"/><rect x="6.2" y="3.5" width="1.6" height="7.3" fill="#9a9a9a"/><rect x="9.2" y="6" width="1.6" height="4.8" fill="#9a9a9a"/><rect x="12.2" y="1.5" width="1.6" height="9.3" fill="#9a9a9a"/></svg>
<svg style="left:1537.8px;top:411.4px;" width="14" height="13" viewBox="0 0 14 13"><path d="M0.7 4.2 V0.7 H4.2 M8.8 0.7 H12.3 V4.2 M12.3 8.8 V12.3 H8.8 M4.2 12.3 H0.7 V8.8" fill="none" stroke="#9a9a9a" stroke-width="1.4"/></svg>
<svg style="left:1556.8px;top:415.9px;" width="11" height="7" viewBox="0 0 11 7"><path d="M0 0 H10 L5 5.9 Z" fill="#fff"/></svg>
<div class="t" style="left:1595.6px;top:409.96px;font-size:9.5px;line-height:9.5px;color:#dcdcdc;font-weight:bold;">http.useragent</div>
<svg style="left:1670.8px;top:409.9px;" width="11.4" height="11.4" viewBox="0 0 11.4 11.4"><circle cx="5.7" cy="5.7" r="5.7" fill="#8a8a8a"/><path d="M3.6 3.6 L7.800000000000001 7.800000000000001 M7.800000000000001 3.6 L3.6 7.800000000000001" stroke="#222" stroke-width="1.2"/></svg>
<div class="r" style="left:1452.1px;top:431px;width:416.70000000000005px;height:1px;background:#3d3d3d;"></div>
<div class="t" style="left:1464.8px;top:440.80px;font-size:11.1px;line-height:11.1px;color:#fff;font-weight:normal;">43</div>
<div class="t" style="left:1595.6px;top:440.80px;font-size:11.1px;line-height:11.1px;color:#fff;font-weight:normal;">Mozilla/4.0 (compatible; UPnP/1.0; Windows 9x)</div>
<div class="r" style="left:1452.1px;top:460px;width:416.70000000000005px;height:1px;background:#3a3a3a;"></div>
<div class="t" style="left:1464.8px;top:469.73px;font-size:11.1px;line-height:11.1px;color:#fff;font-weight:normal;">5</div>
<div class="t" style="left:1595.6px;top:469.73px;font-size:11.1px;line-height:11.1px;color:#fff;font-weight:normal;">Mozilla/4.0 (compatible; UPnP/1.0; Windows NT/5.1)</div>
<div class="r" style="left:1452.1px;top:489px;width:416.70000000000005px;height:1px;background:#3a3a3a;"></div>
<div class="t" style="left:1464.8px;top:498.66px;font-size:11.1px;line-height:11.1px;color:#fff;font-weight:normal;">3</div>
<div class="t" style="left:1595.6px;top:498.66px;font-size:11.1px;line-height:11.1px;color:#fff;font-weight:normal;">BitTorrent/6120</div>
<div class="r" style="left:1452.1px;top:518px;width:416.70000000000005px;height:1px;background:#3a3a3a;"></div>
<div class="t" style="right:211.60000000000014px;top:536.69px;font-size:11px;line-height:11px;color:#f0f0f0;font-weight:normal;">Items per page:</div>
<div class="r" style="left:1701.2px;top:526px;width:69.7px;height:29.4px;background:transparent;border:1px solid #8a8a8a;border-radius:4px;"></div>
<div class="t" style="left:1713.8999999999999px;top:535.00px;font-size:13px;line-height:13px;color:#fff;font-weight:normal;">10</div>
<svg style="left:1751.1px;top:540.7px;" width="11" height="7" viewBox="0 0 11 7"><path d="M0 0 H9.5 L4.75 5.9 Z" fill="#bdbdbd"/></svg>
<div class="t" style="right:52.600000000000136px;top:536.69px;font-size:11px;line-height:11px;color:#fff;font-weight:normal;">1-3 of 3</div>
<svg style="left:1733.0px;top:572.0px;" width="11" height="11" viewBox="0 0 11 11"><rect x="0" y="0" width="1.8" height="11" fill="#5f5f5f"/><path d="M9.6 0 V11 L2.6 5.5 Z" fill="#5f5f5f"/></svg>
<svg style="left:1769.2px;top:572.0px;" width="9" height="11" viewBox="0 0 9 11"><path d="M7.5 0.6 L1.6 5.5 L7.5 10.4" fill="none" stroke="#5f5f5f" stroke-width="1.8"/></svg>
<svg style="left:1807.3999999999999px;top:572.0px;" width="9" height="11" viewBox="0 0 9 11"><path d="M1 0.6 L6.9 5.5 L1 10.4" fill="none" stroke="#5f5f5f" stroke-width="1.8"/></svg>
<svg style="left:1842.2px;top:572.0px;" width="11" height="11" viewBox="0 0 11 11"><path d="M0 0 V11 L7 5.5 Z" fill="#5f5f5f"/><rect x="7.8" y="0" width="1.8" height="11" fill="#5f5f5f"/></svg>
<svg style="left:514.9px;top:406.5px;" width="14" height="13" viewBox="0 0 14 13"><rect x="0" y="0" width="14" height="12.5" rx="1.5" fill="#9a9a9a"/><rect x="2.2" y="2.0" width="2" height="1.8" fill="#1f1f1f"/><rect x="6.2" y="2.0" width="2" height="1.8" fill="#1f1f1f"/><rect x="10.2" y="2.0" width="2" height="1.8" fill="#1f1f1f"/><rect x="2.2" y="5.6" width="2" height="1.8" fill="#1f1f1f"/><rect x="6.2" y="5.6" width="2" height="1.8" fill="#1f1f1f"/><rect x="10.2" y="5.6" width="2" height="1.8" fill="#1f1f1f"/><rect x="2.2" y="9.2" width="2" height="1.8" fill="#1f1f1f"/><rect x="6.2" y="9.2" width="2" height="1.8" fill="#1f1f1f"/><rect x="10.2" y="9.2" width="2" height="1.8" fill="#1f1f1f"/></svg>
<svg style="left:536px;top:406.8px;" width="15" height="12" viewBox="0 0 15 12"><rect x="0" y="0.2" width="2.6" height="2.6" fill="#9a9a9a"/><rect x="0" y="4.6" width="2.6" height="2.6" fill="#9a9a9a"/><rect x="0" y="9" width="2.6" height="2.6" fill="#9a9a9a"/><path d="M4.2 1.5 H14.2 M4.2 5.9 H14.2 M4.2 10.3 H14.2" stroke="#9a9a9a" stroke-width="2"/></svg>
<svg style="left:557px;top:406.6px;" width="14" height="13" viewBox="0 0 14 13"><path d="M0.9 4.2 V0.9 H4.2 M8.8 0.9 H12.1 V4.2 M12.1 8.2 V11.5 H8.8 M4.2 11.5 H0.9 V8.2" fill="none" stroke="#9a9a9a" stroke-width="1.8"/></svg>
<svg style="left:582.9px;top:406px;" width="11.3" height="11.3" viewBox="0 0 11.3 11.3"><circle cx="5.65" cy="5.65" r="5.65" fill="#8e8e8e"/><path d="M3.5500000000000003 3.5500000000000003 L7.75 7.75 M7.75 3.5500000000000003 L3.5500000000000003 7.75" stroke="#222" stroke-width="1.2"/></svg>
<div class="t" style="left:654.5px;transform:translateX(-50%);top:430.77px;font-size:9.6px;line-height:9.6px;color:#5a5a5a;font-weight:bold;">http.method, http.virtual_host</div>
<svg style="left:0px;top:0px;left:0;top:0;" width="1905" height="797" viewBox="0 0 1905 797"><defs><clipPath id="skclip"><rect x="0" y="0" width="1905" height="763"/></clipPath><linearGradient id="lg0" gradientUnits="userSpaceOnUse" x1="522.4" y1="0" x2="794" y2="0"><stop offset="0" stop-color="#ffd700"/><stop offset="1" stop-color="#dc143c"/></linearGradient><linearGradient id="lg1" gradientUnits="userSpaceOnUse" x1="522.4" y1="0" x2="794" y2="0"><stop offset="0" stop-color="#ffff00"/><stop offset="1" stop-color="#dc143c"/></linearGradient><linearGradient id="lg2" gradientUnits="userSpaceOnUse" x1="522.4" y1="0" x2="794" y2="0"><stop offset="0" stop-color="#9acd32"/><stop offset="1" stop-color="#dc143c"/></linearGradient><linearGradient id="lg3" gradientUnits="userSpaceOnUse" x1="522.4" y1="0" x2="794" y2="0"><stop offset="0" stop-color="#32cd32"/><stop offset="1" stop-color="#dc143c"/></linearGradient><linearGradient id="lg4" gradientUnits="userSpaceOnUse" x1="522.4" y1="0" x2="794" y2="0"><stop offset="0" stop-color="#ffd700"/><stop offset="1" stop-color="#32cd32"/></linearGradient><linearGradient id="lg5" gradientUnits="userSpaceOnUse" x1="522.4" y1="0" x2="794" y2="0"><stop offset="0" stop-color="#ffd700"/><stop offset="1" stop-color="#008000"/></linearGradient><linearGradient id="lg6" gradientUnits="userSpaceOnUse" x1="522.4" y1="0" x2="794" y2="0"><stop offset="0" stop-color="#ffd700"/><stop offset="1" stop-color="#7fffd4"/></linearGradient><linearGradient id="lg7" gradientUnits="userSpaceOnUse" x1="522.4" y1="0" x2="794" y2="0"><stop offset="0" stop-color="#2bd561"/><stop offset="1" stop-color="#00ffdc"/></linearGradient></defs><g clip-path="url(#skclip)"><path d="M522.4 485.52 C658.20 485.52 658.20 485.52 794 485.52" fill="none" stroke="url(#lg0)" stroke-width="72.04" stroke-opacity="0.5"/><path d="M522.4 559.22 C658.20 559.22 658.20 551.55 794 551.55" fill="none" stroke="url(#lg1)" stroke-width="60.03" stroke-opacity="0.5"/><path d="M522.4 620.91 C658.20 620.91 658.20 605.58 794 605.58" fill="none" stroke="url(#lg2)" stroke-width="48.02" stroke-opacity="0.5"/><path d="M522.4 664.51 C658.20 664.51 658.20 641.60 794 641.60" fill="none" stroke="url(#lg3)" stroke-width="24.01" stroke-opacity="0.5"/><path d="M522.4 711.31 C658.20 711.31 658.20 711.11 794 711.11" fill="none" stroke="url(#lg4)" stroke-width="36.02" stroke-opacity="0.5"/><path d="M522.4 742.82 C658.20 742.82 658.20 750.11 794 750.11" fill="none" stroke="url(#lg5)" stroke-width="27.01" stroke-opacity="0.5"/><path d="M522.4 760.83 C658.20 760.83 658.20 780.30 794 780.30" fill="none" stroke="url(#lg6)" stroke-width="9.00" stroke-opacity="0.5"/><path d="M522.4 681.01 C685.00 681.01 690.00 838.00 794 838.00" fill="none" stroke="url(#lg7)" stroke-width="9.00" stroke-opacity="0.5"/><rect x="514" y="449.5" width="8.4" height="72.04" fill="#ffd700" stroke="#3a6a92" stroke-width="0.9"/><rect x="514" y="529.2" width="8.4" height="60.03" fill="#ffff00" stroke="#3a6a92" stroke-width="0.9"/><rect x="514" y="596.9" width="8.4" height="48.02" fill="#9acd32" stroke="#3a6a92" stroke-width="0.9"/><rect x="514" y="652.5" width="8.4" height="33.02" fill="#32cd32" stroke="#3a6a92" stroke-width="0.9"/><rect x="514" y="693.3" width="8.4" height="72.04" fill="#ffd700" stroke="#3a6a92" stroke-width="0.9"/><rect x="794" y="449.5" width="8.7" height="204.10" fill="#dc143c" stroke="#3a6a92" stroke-width="0.9"/><rect x="794" y="693.1" width="8.7" height="36.02" fill="#32cd32" stroke="#3a6a92" stroke-width="0.9"/><rect x="794" y="736.6" width="8.7" height="27.01" fill="#008000" stroke="#3a6a92" stroke-width="0.9"/><rect x="794" y="775.8" width="8.7" height="9.00" fill="#7fffd4" stroke="#3a6a92" stroke-width="0.9"/><rect x="794" y="792.5" width="8.7" height="9.00" fill="#00ffdc" stroke="#3a6a92" stroke-width="0.9"/><text x="527" y="488.92" font-family="Liberation Sans" font-size="9.6" fill="#fff">POST</text><text x="527" y="562.62" font-family="Liberation Sans" font-size="9.6" fill="#fff">SUBSCRIBE</text><text x="527" y="624.31" font-family="Liberation Sans" font-size="9.6" fill="#fff">UNSUBSCRIBE</text><text x="527" y="672.41" font-family="Liberation Sans" font-size="9.6" fill="#fff">GET</text><text x="527" y="732.72" font-family="Liberation Sans" font-size="9.6" fill="#fff">NOTIFY</text><text x="789.9" y="554.95" font-family="Liberation Sans" font-size="9.6" fill="#fff" text-anchor="end">192.168.10.100:2869</text><text x="789.9" y="714.51" font-family="Liberation Sans" font-size="9.6" fill="#fff" text-anchor="end">192.168.10.125:2869</text><text x="789.9" y="753.51" font-family="Liberation Sans" font-size="9.6" fill="#fff" text-anchor="end">192.168.10.127:2869</text><text x="789.9" y="783.70" font-family="Liberation Sans" font-size="9.6" fill="#fff" text-anchor="end">192.168.10.124:2869</text><text x="789.9" y="800.40" font-family="Liberation Sans" font-size="9.6" fill="#fff" text-anchor="end">bttracker.debian.org:6969</text></g></svg>
</body></html>
